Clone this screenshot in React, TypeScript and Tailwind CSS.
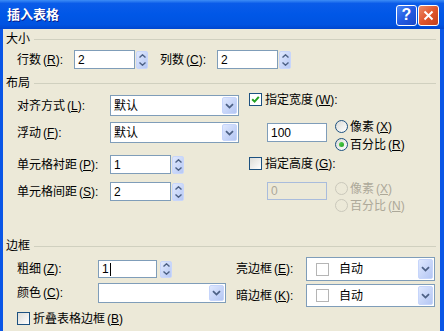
import React from "react";

// XP style "insert table" dialog

const Mn = ({ k }: { k: string }) => (
  <span className="ml-[2px]">
    (<span className="underline underline-offset-1">{k}</span>)
  </span>
);

const TextBox = ({
  cls,
  disabled,
  children,
}: {
  cls: string;
  disabled?: boolean;
  children?: React.ReactNode;
}) => (
  <div
    className={`flex items-center shrink-0 pl-[3px] border ${
      disabled
        ? "border-[#a9bcdc] bg-[#ece9d8] text-[#aca899]"
        : "border-[#7f9db9] bg-white"
    } ${cls}`}
  >
    {children}
  </div>
);

const Chevron = ({ up }: { up?: boolean }) => (
  <svg width="7" height="4" viewBox="0 0 7 4">
    <polyline
      points={up ? "0.5,3.5 3.5,0.8 6.5,3.5" : "0.5,0.5 3.5,3.2 6.5,0.5"}
      fill="none"
      stroke="#4d6185"
      strokeWidth="1.4"
    />
  </svg>
);

const Spin = ({ cls }: { cls: string }) => (
  <div
    className={`flex flex-col shrink-0 w-[12px] rounded-[2px] border border-[#c8d6fb] bg-gradient-to-br from-[#e1e9fd] to-[#b6c8f4] ${cls}`}
  >
    <div className="flex-1 flex items-center justify-center">
      <Chevron up />
    </div>
    <div className="flex-1 flex items-center justify-center">
      <Chevron />
    </div>
  </div>
);

const DropBtn = () => (
  <div className="w-[15px] shrink-0 rounded-[2px] border border-[#c6d5fb] bg-gradient-to-br from-[#dfe8fe] to-[#b4c6f3] flex items-center justify-center">
    <svg width="9" height="6" viewBox="0 0 9 6">
      <polyline
        points="1,1.2 4.5,4.6 8,1.2"
        fill="none"
        stroke="#4d6185"
        strokeWidth="1.8"
      />
    </svg>
  </div>
);

const Select = ({
  cls,
  children,
}: {
  cls: string;
  children?: React.ReactNode;
}) => (
  <div
    className={`flex shrink-0 items-stretch border border-[#7f9db9] bg-white p-px ${cls}`}
  >
    <div className="flex-1 flex items-center pl-[2px]">{children}</div>
    <DropBtn />
  </div>
);

const Check = ({ checked }: { checked?: boolean }) => (
  <div
    className={`w-[13px] h-[13px] shrink-0 border border-[#1c5180] flex items-center justify-center ${
      checked ? "bg-white" : "bg-gradient-to-br from-[#dcdcd7] to-white"
    }`}
  >
    {checked && (
      <svg width="9" height="9" viewBox="0 0 9 9">
        <path
          d="M1.2 4.2 L3.6 6.6 L7.8 1.8"
          stroke="#21a121"
          strokeWidth="2"
          fill="none"
        />
      </svg>
    )}
  </div>
);

const Radio = ({
  checked,
  disabled,
}: {
  checked?: boolean;
  disabled?: boolean;
}) => (
  <div
    className={`w-[13px] h-[13px] shrink-0 rounded-full border flex items-center justify-center ${
      disabled
        ? "border-[#cac8bb] bg-[#ece9d8]"
        : "border-[#1c5180] bg-gradient-to-br from-[#dcdcd7] to-white"
    }`}
  >
    {checked && (
      <div className="w-[5px] h-[5px] rounded-full bg-gradient-to-br from-[#55d551] to-[#21a121]" />
    )}
  </div>
);

const RadioRow = ({
  label,
  k,
  checked,
  disabled,
  cls = "",
}: {
  label: string;
  k: string;
  checked?: boolean;
  disabled?: boolean;
  cls?: string;
}) => (
  <div
    className={`flex items-center h-[13px] ${
      disabled ? "text-[#aca899]" : ""
    } ${cls}`}
  >
    <Radio checked={checked} disabled={disabled} />
    <span className="ml-[2px]">
      {label}
      <Mn k={k} />
    </span>
  </div>
);

const Group = ({ title, cls }: { title: string; cls: string }) => (
  <div className={`flex items-center h-[14px] pl-[3px] pr-[4px] ${cls}`}>
    <span>{title}</span>
    <div className="flex-1 ml-[4px] h-px bg-[#d0d0bf]" />
  </div>
);

const Swatch = () => (
  <div className="flex items-center pl-[6px]">
    <div className="w-[13px] h-[13px] border border-[#b5b5b5] bg-white" />
    <span className="ml-[10px]">自动</span>
  </div>
);

export default function App() {
  return (
    <div className="w-[444px] h-[331px] overflow-hidden flex flex-col text-[12px] leading-[14px] text-black font-['Liberation_Sans','Noto_Sans_CJK_SC',sans-serif]">
      {/* title bar */}
      <div className="h-[29px] shrink-0 flex items-center pl-[7px] pr-[5px] bg-[linear-gradient(to_bottom,#3d8df6_0%,#0a5ce9_12%,#0057e7_50%,#0053e1_85%,#0046cf_100%)]">
        <span className="text-white font-bold text-[13px] [text-shadow:1px_1px_#0a1e8c]">
          插入表格
        </span>
        <div className="ml-auto flex gap-[1px] mt-[1px]">
          <div className="w-[21px] h-[21px] rounded-[3px] border border-white bg-gradient-to-br from-[#4a86f5] via-[#225ae2] to-[#1a48c8] flex items-center justify-center text-white font-bold text-[16px] leading-none">
            ?
          </div>
          <div className="w-[21px] h-[21px] rounded-[3px] border border-white bg-gradient-to-br from-[#eb8a66] via-[#e0562c] to-[#c2401c] flex items-center justify-center">
            <svg width="11" height="11" viewBox="0 0 11 11">
              <path
                d="M1.5 1.5 L9.5 9.5 M9.5 1.5 L1.5 9.5"
                stroke="white"
                strokeWidth="2"
              />
            </svg>
          </div>
        </div>
      </div>

      {/* body */}
      <div className="flex-1 flex flex-col bg-[#ece9d8] border-l-[3px] border-r-[4px] border-[#0a56e6]">
        <Group title="大小" cls="mt-[3px]" />
        <div className="flex items-center h-[19px] mt-[4px] pl-[14px]">
          <span className="w-[57px] shrink-0">
            行数<Mn k="R" />:
          </span>
          <TextBox cls="w-[61px] h-[19px]">2</TextBox>
          <Spin cls="ml-[1px] h-[18px]" />
          <span className="w-[57px] shrink-0 ml-[12px]">
            列数<Mn k="C" />:
          </span>
          <TextBox cls="w-[61px] h-[19px]">2</TextBox>
          <Spin cls="ml-[1px] h-[18px]" />
        </div>

        <Group title="布局" cls="mt-[7px]" />
        <div className="flex h-[149px] pl-[14px]">
          {/* left column */}
          <div className="w-[232px] shrink-0 flex flex-col">
            <div className="flex items-center h-[21px] mt-[5px]">
              <span className="w-[93px] shrink-0">
                对齐方式<Mn k="L" />:
              </span>
              <Select cls="w-[129px] h-[21px]">默认</Select>
            </div>
            <div className="flex items-center h-[21px] mt-[6px]">
              <span className="w-[93px] shrink-0">
                浮动<Mn k="F" />:
              </span>
              <Select cls="w-[129px] h-[21px]">默认</Select>
            </div>
            <div className="flex items-center h-[19px] mt-[12px]">
              <span className="w-[93px] shrink-0">
                单元格衬距<Mn k="P" />:
              </span>
              <TextBox cls="w-[61px] h-[19px]">1</TextBox>
              <Spin cls="ml-[1px] h-[18px]" />
            </div>
            <div className="flex items-center h-[19px] mt-[8px]">
              <span className="w-[93px] shrink-0">
                单元格间距<Mn k="S" />:
              </span>
              <TextBox cls="w-[61px] h-[19px]">2</TextBox>
              <Spin cls="ml-[1px] h-[18px]" />
            </div>
          </div>

          {/* right column */}
          <div className="flex-1 flex flex-col">
            <div className="flex items-center h-[13px] mt-[3px]">
              <Check checked />
              <span className="ml-[3px]">
                指定宽度<Mn k="W" />:
              </span>
            </div>
            <div className="flex mt-[14px] pl-[18px]">
              <TextBox cls="w-[60px] h-[19px] mt-[3px]">100</TextBox>
              <div className="flex flex-col ml-[8px]">
                <RadioRow label="像素" k="X" />
                <RadioRow label="百分比" k="R" checked cls="mt-[5px]" />
              </div>
            </div>
            <div className="flex items-center h-[13px] mt-[6px]">
              <Check />
              <span className="ml-[3px]">
                指定高度<Mn k="G" />:
              </span>
            </div>
            <div className="flex mt-[12px] pl-[18px]">
              <TextBox cls="w-[60px] h-[18px]" disabled>
                0
              </TextBox>
              <div className="flex flex-col ml-[8px]">
                <RadioRow label="像素" k="X" disabled />
                <RadioRow label="百分比" k="N" disabled cls="mt-[4px]" />
              </div>
            </div>
          </div>
        </div>

        <Group title="边框" cls="" />
        <div className="flex items-center h-[24px] mt-[4px] pl-[14px]">
          <div className="w-[219px] shrink-0 flex items-center">
            <span className="w-[81px] shrink-0">
              粗细<Mn k="Z" />:
            </span>
            <TextBox cls="w-[59px] h-[18px]">
              1<span className="inline-block w-px h-[13px] bg-black ml-[1px]" />
            </TextBox>
            <Spin cls="ml-[3px] h-[17px]" />
          </div>
          <span className="w-[70px] shrink-0">
            亮边框<Mn k="E" />:
          </span>
          <Select cls="w-[129px] h-[24px]">
            <Swatch />
          </Select>
        </div>
        <div className="flex items-start h-[24px] mt-[2px] pl-[14px]">
          <div className="w-[219px] shrink-0 flex items-center h-[20px]">
            <span className="w-[81px] shrink-0">
              颜色<Mn k="C" />:
            </span>
            <Select cls="w-[128px] h-[20px]" />
          </div>
          <div className="flex items-center mt-[1px] h-[23px]">
            <span className="w-[70px] shrink-0">
              暗边框<Mn k="K" />:
            </span>
            <Select cls="w-[129px] h-[23px]">
              <Swatch />
            </Select>
          </div>
        </div>
        <div className="flex items-center h-[13px] mt-[5px] pl-[14px]">
          <Check />
          <span className="ml-[3px]">
            折叠表格边框<Mn k="B" />
          </span>
        </div>
      </div>
    </div>
  );
}
